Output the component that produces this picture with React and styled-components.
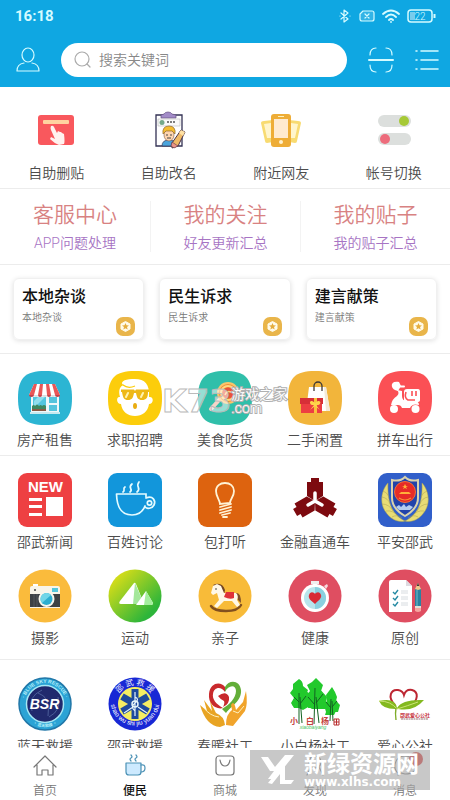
import styled, { createGlobalStyle } from 'styled-components';

const GlobalStyle = createGlobalStyle`
    * {
        box-sizing: border-box;
    }

    body {
        margin: 0;
        background-color: #fff;
        color: #4c4c4c;
        font-family: Roboto, 'Noto Sans CJK SC', sans-serif;
        font-size: 14px;
        font-weight: 350;
    }

    a {
        color: inherit;
        text-decoration: none;
    }

    button {
        padding: 0;
        border: none;
        background: none;
        cursor: pointer;
    }

    svg {
        display: block;
        flex-shrink: 0;
    }
`;

const Screen = styled.div`
    display: flex;
    flex-direction: column;
    height: 100vh;
`;

const Header = styled.header`
    background-color: #0fa7e2;
    color: #d5fbff;
`;

const StatusBar = styled.div`
    display: flex;
    align-items: center;
    justify-content: space-between;
    height: 32px;
    padding: 0 14px 0 15px;
`;

const Clock = styled.span`
    font-size: 15px;
    font-weight: bold;
`;

const StatusIcons = styled.div`
    display: flex;
    align-items: center;
    gap: 7px;
`;

const SearchRow = styled.div`
    display: flex;
    align-items: center;
    gap: 21px;
    height: 55px;
    padding: 0 11px 0 16px;
`;

const IconButton = styled.button`
    color: inherit;
`;

const SearchBox = styled.label`
    display: flex;
    flex: 1;
    align-items: center;
    gap: 8px;
    min-width: 0;
    height: 34px;
    padding: 0 13px;
    border-radius: 17px;
    background-color: #fff;
    color: #aaa;
`;

const SearchInput = styled.input`
    flex: 1;
    min-width: 0;
    padding: 0;
    border: none;
    outline: none;
    background: none;
    color: #555;
    font-family: inherit;
    font-size: 14px;
    font-weight: inherit;

    &::placeholder {
        color: #888;
        opacity: 1;
    }
`;

const Content = styled.main`
    flex: 1;
    min-height: 0;
    overflow-y: auto;
    scrollbar-width: none;
`;

const Section = styled.section`
    position: relative;
    border-bottom: 1px solid #ececec;
`;

const QuickRow = styled(Section)`
    display: grid;
    grid-template-columns: repeat(4, 1fr);
    padding: 23px 0 6px;
`;

const QuickLink = styled.a`
    display: flex;
    flex-direction: column;
    align-items: center;
    gap: 14px;
    line-height: 18px;
`;

const LinkRow = styled(Section)`
    display: grid;
    grid-template-columns: repeat(3, 1fr);
    padding: 12px 0;
`;

const TextLink = styled.a`
    display: flex;
    flex-direction: column;
    align-items: center;
    gap: 8px;
    padding: 0 0 3px;
    border-left: 1px solid #f3f3f3;

    &:first-child {
        border-left: none;
    }
`;

const LinkTitle = styled.span`
    color: #d88282;
    font-size: 21px;
    line-height: 28px;
`;

const LinkNote = styled.span`
    color: #a774c4;
    line-height: 12px;
`;

const CardRow = styled(Section)`
    display: grid;
    grid-template-columns: repeat(3, 1fr);
    gap: 15px;
    padding: 13px;
`;

const Card = styled.a`
    display: flex;
    flex-direction: column;
    gap: 2px;
    height: 62px;
    padding: 8px;
    border: 1px solid #f0f0f0;
    border-radius: 6px;
    box-shadow: 0 1px 5px rgba(0, 0, 0, 0.12);
`;

const CardTitle = styled.span`
    color: #111;
    font-size: 16px;
    font-weight: 500;
    line-height: 20px;
`;

const CardFoot = styled.span`
    display: flex;
    justify-content: space-between;
    color: #777;
    font-size: 10px;
    line-height: 18px;

    svg {
        margin-top: 8px;
    }
`;

const IconGrid = styled(Section)`
    display: grid;
    grid-template-columns: repeat(5, 1fr);
    row-gap: 18px;
    padding: 17px 0 ${(props) => props.$bottom}px;
`;

const GridLink = styled.a`
    display: flex;
    flex-direction: column;
    align-items: center;
    gap: 6px;
    line-height: 18px;
    white-space: nowrap;
`;

const TabBar = styled.nav`
    position: relative;
    display: grid;
    grid-template-columns: repeat(5, 1fr);
    height: 52px;
    background-color: #fff;
`;

const Tab = styled.a`
    display: flex;
    flex-direction: column;
    align-items: center;
    gap: 5px;
    padding-top: 6px;
    color: ${(props) => (props.$active ? '#111' : '#777')};
    font-size: 12px;
    font-weight: ${(props) => (props.$active ? 500 : 350)};
    line-height: 16px;
`;

const TabIcon = styled.span`
    position: relative;
`;

const Badge = styled.span`
    position: absolute;
    top: -2px;
    right: -6px;
    width: 14px;
    height: 14px;
    border-radius: 7px;
    background-color: #d62222;
    color: #fff;
    font-size: 10px;
    line-height: 14px;
    text-align: center;
`;

const GameMark = styled.div`
    position: absolute;
    top: 31px;
    left: 36%;
    display: flex;
    align-items: center;
    color: rgba(255, 255, 255, 0.5);
    pointer-events: none;
`;

const GameMarkLogo = styled.span`
    font-family: 'DejaVu Sans', sans-serif;
    font-size: 32px;
    font-weight: bold;
    line-height: 32px;
    -webkit-text-stroke: 1px #bbb;
`;

const GameMarkName = styled.span`
    display: flex;
    flex-direction: column;
    color: #fff;
    font-size: 14px;
    line-height: 14px;
    paint-order: stroke fill;
    -webkit-text-stroke: 2px #b0b0b0;
`;

const SiteMark = styled.div`
    position: absolute;
    top: 2px;
    right: 20px;
    display: flex;
    align-items: center;
    gap: 8px;
    width: 180px;
    height: 40px;
    padding-left: 10px;
    background-color: rgba(170, 170, 170, 0.65);
    color: #fff;
    font-weight: bold;
    pointer-events: none;
`;

const SiteMarkText = styled.span`
    display: flex;
    flex-direction: column;
    font-size: 23px;
    line-height: 24px;
`;

const SiteMarkUrl = styled.small`
    font-family: 'DejaVu Sans', sans-serif;
    font-size: 12px;
    line-height: 10px;
`;

const SQUIRCLE = 'M27 0C47 0 54 7 54 27S47 54 27 54 0 47 0 27 7 0 27 0Z';

function Tile({ children, shape, fill }) {
    return (
        <svg width="54" height="54" viewBox="0 0 54 54" aria-hidden="true">
            {shape === 'squircle' && <path d={SQUIRCLE} fill={fill} />}
            {shape === 'square' && <rect width="54" height="54" rx="9" fill={fill} />}
            {shape === 'circle' && <circle cx="27" cy="27" r="26.5" fill={fill} />}
            {children}
        </svg>
    );
}

const ShopIcon = () => (
    <Tile shape="squircle" fill="#2cb5d3">
        <path d="M13 23H41V42H13Z" fill="#eef8fa" />
        <path d="M15 26H28V39H15Z" fill="#53c6df" />
        <path d="M20 26H27L16 37V30Z" fill="#91deed" />
        <path d="M14 35q2-2 3 0q2-3 4 0q2-2 3 0q2-2 4 0v4H14Z" fill="#3e8860" />
        <path d="M14 38H28V40H14Z" fill="#8b5a45" />
        <path d="M31 26H39V32H31ZM31 34H39V40H31Z" fill="#55c4dd" />
        <path d="M16 13H37L42 24H11Z" fill="#fff" />
        <path d="M16 13h3l-3 11h-5ZM22 13h3l-1 11h-4ZM28 13h3l2 11h-4ZM34 13h3l5 11h-5Z" fill="#e95757" />
        <path d="M11 24h5a2.5 2 0 0 1-5 0M20 24h4a2 2 0 0 1-4 0M29 24h4a2 2 0 0 1-4 0M37 24h5a2.5 2 0 0 1-5 0" fill="#c43f48" />
        <path d="M16 24h4a2 2 0 0 1-4 0M24 24h5a2.5 2 0 0 1-5 0M33 24h4a2 2 0 0 1-4 0" fill="#ddd" />
        <path d="M12 41H42V43H12Z" fill="#c7e9ef" />
    </Tile>
);

const JobIcon = () => (
    <Tile shape="squircle" fill="#fccd0b">
        <path d="M12 26C10 19 12 15 16 14C11 12 16 8 24 8C36 7 42 12 41 26C46 25 46 33 41 33C40 41 34 45 27 45S14 41 13 33C8 33 8 25 12 26Z" fill="#fff" />
        <path d="M15 14Q20 18 27 15" fill="none" stroke="#fccd0b" strokeWidth="1.200" />
        <path d="M13 18.500H26L27 20L28 18.500H41V21H40C40 27 38 29 34 29S29 27 28 22H26C25 27 24 29 20 29S15 27 14 21H13Z" fill="#eeb816" />
        <path d="M20 22l-2 4M35 22l-2 4" stroke="#fff3b0" strokeWidth="2" strokeLinecap="round" />
        <ellipse cx="27" cy="35" rx="2" ry="3" fill="#e9ad12" />
    </Tile>
);

const FoodIcon = () => (
    <Tile shape="squircle" fill="#30bfaa">
        <path d="M22 28L13 38" stroke="#f6d4c8" strokeWidth="4" strokeLinecap="round" />
        <circle cx="30" cy="22" r="11" fill="#fac56b" />
        <circle cx="30" cy="22" r="9" fill="#f08a33" />
        <circle cx="30" cy="22" r="7" fill="none" stroke="#ffd982" strokeWidth="2" />
        <circle cx="30" cy="22" r="5.500" fill="#e8523d" />
        <path d="M27 24q2-5 6-3" fill="none" stroke="#ffd27a" strokeWidth="1.5" />
    </Tile>
);

const BagIcon = () => (
    <Tile shape="squircle" fill="#f2b53b">
        <path d="M21 16H38L42 40H18Z" fill="#fff" />
        <path d="M36 16H38L42 40H38Z" fill="#f3e9d8" />
        <path d="M26 20V15a4 4 0 0 1 8 0V20" fill="none" stroke="#3d3836" strokeWidth="1.3" />
        <path d="M13 32H34V42H13Z" fill="#ed3e42" />
        <path d="M12 27H35V33H12Z" fill="#d72f37" />
        <path d="M26 27H29V42H26Z" fill="#f9c33b" />
        <path d="M27 32c-6-6-7 3-1 2l-4 5 5-4 5 4-4-5c7 1 5-8-1-2" fill="#ffd54b" />
    </Tile>
);

const ScooterIcon = () => (
    <Tile shape="squircle" fill="#fb5055">
        <path d="M21 11c-10-2-9 8-1 9l3-5Z" fill="#fff" />
        <path d="M20 15.500h6" stroke="#fff" strokeWidth="2" strokeLinecap="round" />
        <path d="M19 19q3 3 0 6-5 3-6 9h7q3 0 4 3h8q2-5 9-3 0-4-5-4h-7q-5 0-5-5v-5Z" fill="#fff" />
        <path d="M29 18H40q2 0 2 3V29q0 2-3 2H26V21q0-3 3-3" fill="#fff" />
        <path d="M34 20v5M38 20v5M28 21q-2 6 2 8h7" stroke="#fb5055" strokeWidth="1.600" fill="none" />
        <circle cx="16" cy="38" r="4" fill="#fff" />
        <circle cx="37.500" cy="38" r="4" fill="#fff" />
    </Tile>
);

const NewsIcon = () => (
    <Tile shape="square" fill="#ee4042">
        <text x="27.500" y="19" fill="#fff" fontFamily="Liberation Sans, sans-serif" fontSize="15" fontWeight="bold" textAnchor="middle">
            NEW
        </text>
        <path d="M11 25H24V28H11ZM11 32H24V35H11ZM11 40H24V43H11ZM28 24H45V43H28Z" fill="#fff" />
    </Tile>
);

const TalkIcon = () => (
    <Tile shape="square" fill="#1296db">
        <g fill="none" stroke="#e4fbff" strokeWidth="1.700" strokeLinecap="round">
            <path d="M8.500 21H38V24M8.500 21C9 36 14 42 24 42C31 42 35 38 37 33" />
            <path d="M38 25C45 22 48 28 46 32S39 36 37 34" />
            <circle cx="41.500" cy="30" r="2.200" />
            <path d="M15 19C18 17 14 16 17 14M22 19C26 16 19 15 24 11M29 19C34 15 27 14 31 9" />
        </g>
    </Tile>
);

const BulbIcon = () => (
    <Tile shape="square" fill="#dd630f">
        <g fill="none" stroke="#fff3d6" strokeWidth="1.800" strokeLinecap="round">
            <path d="M22 31C22 27 18 24 18 18C18 13 22 10 27 10S36 13 36 18C36 24 32 26 32 30Z" />
            <path d="M22 34L33 31M22 37L33 34M22 40L33 37M24 42L32 40M25 44H29" />
        </g>
    </Tile>
);

const FinanceIcon = () => (
    <Tile>
        {[0, 120, 240].map((angle) => (
            <path
                key={angle}
                d="M23 5H31V9H35V23L27 28L19 23V9H23Z"
                fill="#7d0a0f"
                transform={`rotate(${angle} 27 28)`}
            />
        ))}
        <path d="M27 20V28L20 32M27 28L34 32" fill="none" stroke="#fff" strokeWidth="3.500" strokeLinecap="round" />
    </Tile>
);

const PoliceIcon = () => (
    <Tile shape="square" fill="#315fca">
        <path d="M27 4C23 8 18 8 14 7V25C14 34 20 39 27 43C34 39 40 34 40 25V7C36 8 31 8 27 4Z" fill="#2243aa" stroke="#d8d2ae" strokeWidth="2" />
        <g fill="#e8dc75" stroke="#aaa04e" strokeWidth=".5">
            <path d="M10 10C4 16 1 29 7 38C12 46 20 50 27 48C17 43 9 34 10 10Z" />
            <path d="M44 10C50 16 53 29 47 38C42 46 34 50 27 48C37 43 45 34 44 10Z" />
            <path d="M4 24q6 1 8 7M4 31q7 0 11 7M8 38q7-1 12 5M14 44q5-3 10 1M5 18q4 1 6 6" fill="none" />
            <path d="M50 24q-6 1-8 7M50 31q-7 0-11 7M46 38q-7-1-12 5M40 44q-5-3-10 1M49 18q-4 1-6 6" fill="none" />
        </g>
        <circle cx="27" cy="19" r="10.500" fill="#e72b27" stroke="#f1703b" strokeWidth="1" />
        <path d="M27 11l1 2h2l-2 1 1 2-2-1-2 1 1-2-2-1h2ZM21 21H33L31 19H23Z" fill="#ffb13a" />
        <path d="M21 25q6 4 12 0" stroke="#f79233" strokeWidth="1.200" fill="none" />
        <path d="M18 34l3-2 2 2 3-3 2 3 3-2 4 2-3 3H21Z" fill="#b4cdef" />
    </Tile>
);

const CameraIcon = () => (
    <Tile shape="circle" fill="#fabb3c">
        <path d="M12 19q0-2 2-2H40q2 0 2 2V39H12Z" fill="#f8f4e9" />
        <path d="M12 25H42V38H12Z" fill="#3d4144" />
        <path d="M16 25V38M19 25V38" stroke="#55595c" />
        <rect x="15" y="15" width="5" height="2" fill="#fff" />
        <rect x="34" y="19" width="6" height="4" fill="#54c7dd" />
        <circle cx="17" cy="21" r="1" fill="#444" />
        <circle cx="28.500" cy="30" r="8" fill="#f6f6ed" />
        <circle cx="28.500" cy="30" r="6" fill="#2caed0" />
        <path d="M24 34A6 6 0 0 1 33 26Z" fill="#70d6e8" />
    </Tile>
);

const SportIcon = () => (
    <Tile>
        <defs>
            <linearGradient id="sport" x1="0" y1="0" x2="1" y2="1">
                <stop offset=".15" stopColor="#d3dc19" />
                <stop offset=".8" stopColor="#2db53a" />
            </linearGradient>
        </defs>
        <circle cx="27" cy="27" r="26.5" fill="url(#sport)" />
        <path d="M26 14Q27 13 28 15L36 35H13Q10 35 12 32Z" fill="#fff" />
        <path d="M27 14L36 35H25Z" fill="#a4e79a" />
        <path d="M38 22L45 34Q45 36 43 36H28Z" fill="#fff" />
        <path d="M38 22L45 34Q45 36 43 36H36Z" fill="#a4ef9d" />
    </Tile>
);

const HorseIcon = () => (
    <Tile shape="circle" fill="#f8bb39">
        <path d="M13 37Q16 42 28 42T43 36" fill="none" stroke="#82501f" strokeWidth="2.500" strokeLinecap="round" />
        <path d="M15 16Q24 12 27 21L26 26L22 22Z" fill="#714523" />
        <path d="M38 24Q43 23 43 34L40 31Z" fill="#805028" />
        <path d="M13 24L15 17L19 15L23 17L26 24H38Q41 27 39 31L42 36L39 38L34 32H26L19 39L16 37L21 31L19 24L15 26Z" fill="#fff8e8" />
        <path d="M28 23H36V29Q32 31 26 28Z" fill="#df323a" />
        <circle cx="18" cy="20" r=".8" fill="#333" />
    </Tile>
);

const HealthIcon = () => (
    <Tile shape="circle" fill="#df4e61">
        <path d="M23 12H31V15H29V18H25V15H23Z" fill="#f1eeee" />
        <path d="M36 17l3-2 1 2-2 3Z" fill="#f5d9dd" />
        <circle cx="27" cy="29" r="14" fill="#fff" />
        <circle cx="27" cy="29" r="11" fill="#b8e5ec" />
        <path d="M27 18A11 11 0 0 1 27 40Z" fill="#8bd0df" />
        <path d="M27 35C22 31 20 29 21 26C22 22 26 23 27 25C28 23 32 22 33 26C34 29 31 31 27 35Z" fill="#d92b34" />
    </Tile>
);

const WritingIcon = () => (
    <Tile shape="circle" fill="#df4e61">
        <path d="M11 13Q11 11 13 11H28L34 17V43H11Z" fill="#fff" />
        <path d="M28 11L34 17H28Z" fill="#ded9df" />
        <path d="M15 23l2 2 3-4M15 29l2 2 3-4M15 35l2 2 3-4" fill="none" stroke="#258aa3" strokeWidth="1.400" />
        <path d="M23 22H30M23 24H30M23 28H30M23 30H30M23 34H30M23 36H30" stroke="#d7dce0" />
        <path d="M37 21L40 14L43 21V38H37Z" fill="#2b82a0" />
        <path d="M37 20L40 14L43 20L40 21Z" fill="#efc78a" />
        <path d="M39 17L40 14L41 17Z" fill="#222" />
        <path d="M39 21V38" stroke="#74b9c9" />
        <path d="M37 38H43V42Q40 44 37 42Z" fill="#f5a6a0" />
        <path d="M37 37H43V39H37Z" fill="#e2dfd7" />
    </Tile>
);

const BlueSkyIcon = () => (
    <Tile>
        <defs>
            <path id="skyTop" d="M6 27A21 21 0 0 1 48 27" />
            <path id="skyBottom" d="M4 27A23 23 0 0 0 50 27" />
        </defs>
        <circle cx="27" cy="27" r="26" fill="#2ba3d5" stroke="#2177a8" strokeWidth="1.500" />
        <circle cx="27" cy="27" r="18.500" fill="#20296d" stroke="#a6e7f4" strokeWidth="1.500" />
        <path d="M14 34Q9 20 24 13M40 20Q44 33 31 40M20 16Q33 20 30 39" fill="none" stroke="#5d72aa" strokeWidth=".7" />
        <g fill="#b8eff9" fontFamily="Liberation Sans, sans-serif" fontSize="5" fontWeight="bold" textAnchor="middle">
            <text>
                <textPath href="#skyTop" startOffset="50%">· BLUE SKY RESCUE ·</textPath>
            </text>
            <text fontFamily="Noto Sans CJK SC, sans-serif" fontSize="4">
                <textPath href="#skyBottom" startOffset="50%">· 蓝天救援 ·</textPath>
            </text>
        </g>
        <text x="26.500" y="32" fill="#fff" fontFamily="Liberation Sans, sans-serif" fontSize="14" fontStyle="italic" fontWeight="bold" textAnchor="middle">
            BSR
        </text>
    </Tile>
);

const RescueIcon = () => (
    <Tile>
        <defs>
            <path id="rescueTop" d="M8 27A19 19 0 0 1 46 27" />
            <path id="rescueBottom" d="M3 19A24.500 24.500 0 1 0 51 19" />
        </defs>
        <circle cx="27" cy="27" r="26.5" fill="#1828d5" />
        <circle cx="27" cy="27" r="17" fill="#f5ee63" />
        {[0, 60, 120].map((angle) => (
            <path key={angle} d="M23.500 12H30.500V42H23.500Z" fill="#1e4b9e" transform={`rotate(${angle} 27 27)`} />
        ))}
        <circle cx="27" cy="27" r="3" fill="none" stroke="#e8f5fa" strokeWidth="1.500" />
        <path d="M27 15V39M27 20Q32 22 27 26T27 34M25 30L16 36M30 30L39 36" fill="none" stroke="#e8f5fa" strokeWidth="1.200" />
        <text fill="#fff" fontFamily="Noto Sans CJK SC, sans-serif" fontSize="8" textAnchor="middle">
            <textPath href="#rescueTop" startOffset="50%">邵 武 救 援</textPath>
        </text>
        <text fill="#fff" fontFamily="Liberation Sans, sans-serif" fontSize="6.500" textAnchor="middle">
            <textPath href="#rescueBottom" startOffset="50%">shao wu shi jiu yuan dui</textPath>
        </text>
    </Tile>
);

const WarmIcon = () => (
    <Tile>
        <path d="M27 10C23 4 12 5 11 17C10 27 18 33 25 31C18 27 14 22 15 17C16 10 23 9 27 15Z" fill="#c92a2d" />
        <path d="M27 10C31 2 42 3 43 13C44 24 33 29 28 36L24 32C31 28 38 21 38 14C38 7 30 8 27 15Z" fill="#63ae39" />
        <path d="M20 19Q28 13 31 20Q32 27 25 30Q27 26 26 24Q23 23 20 19Z" fill="#c8292d" />
        <path d="M2 28L9 34L6 23L14 34L12 24L18 36Q26 39 27 48L22 50Q8 49 2 28Z" fill="#e8a423" />
        <path d="M48 14Q50 27 47 34L35 49L28 48Q28 37 34 33L33 28Q36 22 38 33L45 25Z" fill="#f1a42b" />
        <path d="M6 31q6 8 15 9M35 34l5 2 6-7" fill="none" stroke="#fff1be" strokeWidth="1" />
    </Tile>
);

const TreesIcon = () => (
    <Tile>
        <g fill="#22c92c">
            <path d="M11 2Q15 4 15 9L20 13L18 18L20 24L16 31H6L3 26L6 21L2 16L5 12L5 7Z" />
            <path d="M28 1L32 5L35 8L33 14L37 20L34 25L36 31H20L21 24L18 19L22 14L19 8L24 5Z" />
            <path d="M44 10L47 15L49 20L48 24L52 28L50 35H38L36 28L39 24L38 18Z" />
            <path d="M10 8L22 17V29L15 33L4 28ZM30 10L39 20L37 32H24L19 29ZM44 16L51 28L46 38H37Z" />
        </g>
        <path d="M11 47V16M14 46L12 20M26 47L27 11M31 46L28 20M42 44L43 22M45 44L44 24M11 25L6 20M12 27L18 19M27 28L20 20M28 26L35 17M43 31L38 25M44 30L49 24" fill="none" stroke="#126221" strokeWidth="1" />
        <g fill="#c3433d" fontFamily="Noto Sans CJK SC, sans-serif" fontSize="8" fontWeight="bold">
            <text x="2" y="47">小</text>
            <text x="18" y="47">白</text>
            <text x="33" y="47">杨</text>
        </g>
        <path d="M46 42H51V48H46ZM46 45H51M48.500 42V48" fill="none" stroke="#b82d2d" />
        <text x="25" y="52" fill="#45c45b" fontFamily="Liberation Sans, sans-serif" fontSize="5" fontStyle="italic" textAnchor="middle">
            xiaobaiyang
        </text>
    </Tile>
);

const LoveIcon = () => (
    <Tile>
        <path d="M17 28C9 20 13 12 20 13Q25 14 26 18Q28 12 34 13C41 15 40 23 33 29" fill="none" stroke="#bd2632" strokeWidth="2" />
        <path d="M1 24Q17 20 19 31Q24 22 46 23Q36 35 20 32Q5 33 1 24Z" fill="#83b91f" />
        <path d="M1 24Q13 24 19 32Q29 29 40 25" fill="none" stroke="#cce477" />
        <path d="M18 31Q17 36 18 43" fill="none" stroke="#7eac27" strokeWidth="1.400" />
        <text x="22" y="40" fill="#c52d38" fontFamily="Noto Sans CJK SC, sans-serif" fontSize="5" fontWeight="bold">
            邵武爱心公社
        </text>
        <path d="M23 42H50" stroke="#7f5555" strokeWidth=".8" strokeDasharray="2 .5" />
    </Tile>
);

function QuickIcon({ children }) {
    return (
        <svg width="40" height="40" viewBox="0 0 40 40" aria-hidden="true">
            {children}
        </svg>
    );
}

const DeleteIcon = () => (
    <QuickIcon>
        <rect x="2" y="5" width="36" height="30" rx="3" fill="#f9585d" />
        <rect x="7" y="10" width="26" height="4" rx="1" fill="#ffd2a0" />
        <path d="M15 16q2-1 3 1l3 6 1-2 2 1 1 0 1 1 2 1q1 8 0 10l-5 1q-5-2-9-6l1-2 4 2-4-9q-1-2 0-4" fill="#fff2ef" />
    </QuickIcon>
);

const RenameIcon = () => (
    <QuickIcon>
        <path d="M7 5H33V36H7Z" fill="#fff" stroke="#333254" strokeWidth="1.300" />
        <path d="M12 5L15 4Q16 2 19 2T23 4L27 5V8H12Z" fill="#a28bc7" stroke="#665183" strokeWidth=".7" />
        <path d="M9 9H31V16H9Z" fill="#fafafa" stroke="#bbb" strokeWidth=".6" />
        <circle cx="13" cy="12.500" r="2.500" fill="#74a989" />
        <path d="M18 12H26" stroke="#555" strokeWidth="1.500" strokeDasharray="2 1" />
        <path d="M13 36Q13 30 20 30T27 36Z" fill="#4aa5dd" stroke="#394365" strokeWidth=".8" />
        <ellipse cx="20" cy="25" rx="5" ry="6" fill="#ffd5af" stroke="#754" strokeWidth=".6" />
        <path d="M14 24Q13 16 20 16T26 24L23 21H17Z" fill="#f5bd31" stroke="#8f6730" strokeWidth=".7" />
        <path d="M17 25h2m2 0h2M18 28h4" stroke="#444" />
        <path d="M32 20L36 22L29 36L23 38L23 33Z" fill="#efb966" stroke="#493349" strokeWidth="1" />
        <path d="M23 32L29 36L25 38L22 36Z" fill="#e99386" stroke="#5a3546" strokeWidth=".6" />
        <path d="M32 20L36 22L34 26L30 23Z" fill="#ffe1a4" />
    </QuickIcon>
);

const PhonesIcon = () => (
    <QuickIcon>
        <path d="M0 13Q0 11 3 11L12 10V32L6 33Q4 33 4 31Z" fill="#f8db71" />
        <path d="M3 14L10 13V28H6Z" fill="#fff5cc" />
        <path d="M40 13Q40 11 37 11L28 10V32L34 33Q36 33 36 31Z" fill="#f8db71" />
        <path d="M37 14L30 13V28H34Z" fill="#fff5cc" />
        <rect x="10" y="4" width="20" height="33" rx="3" fill="#eead37" />
        <rect x="13" y="9" width="14" height="19" fill="#ffead0" />
        <path d="M17 6.500H23" stroke="#fff2bd" />
        <circle cx="20" cy="32" r="2" fill="#fff1cd" />
    </QuickIcon>
);

const SwitchIcon = () => (
    <QuickIcon>
        <rect x="4" y="5" width="33" height="12" rx="6" fill="#dcdfdd" />
        <rect x="4" y="23" width="33" height="12" rx="6" fill="#dcdfdd" />
        <circle cx="30" cy="11" r="5" fill="#a6c936" />
        <circle cx="11" cy="29" r="5" fill="#ed6c7c" />
    </QuickIcon>
);

const CardBadge = () => (
    <svg width="19" height="19" viewBox="0 0 19 19" aria-hidden="true">
        <rect width="19" height="19" rx="7" fill="#e9b54a" />
        <path d="M9.500 4.500L14 7V12L9.500 14.500L5 12V7Z" fill="#fffbea" stroke="#fffbea" strokeLinejoin="round" />
        <path d="M9.500 6l1 2.300 2.500.2-2 1.600.7 2.400-2.200-1.300-2.200 1.300.7-2.400-2-1.600 2.500-.2Z" fill="#e5ad3e" />
    </svg>
);

function LineIcon({ children, width = 24, height = 24, stroke = 'currentColor', strokeWidth = 1.2 }) {
    return (
        <svg
            width={width}
            height={height}
            viewBox={`0 0 ${width} ${height}`}
            fill="none"
            stroke={stroke}
            strokeWidth={strokeWidth}
            strokeLinecap="round"
            strokeLinejoin="round"
            aria-hidden="true"
        >
            {children}
        </svg>
    );
}

const quickLinks = [
    { label: '自助删贴', Icon: DeleteIcon },
    { label: '自助改名', Icon: RenameIcon },
    { label: '附近网友', Icon: PhonesIcon },
    { label: '帐号切换', Icon: SwitchIcon },
];

const textLinks = [
    { title: '客服中心', note: 'APP问题处理' },
    { title: '我的关注', note: '好友更新汇总' },
    { title: '我的贴子', note: '我的贴子汇总' },
];

const cards = ['本地杂谈', '民生诉求', '建言献策'];

const lifeLinks = [
    { label: '房产租售', Icon: ShopIcon },
    { label: '求职招聘', Icon: JobIcon },
    { label: '美食吃货', Icon: FoodIcon },
    { label: '二手闲置', Icon: BagIcon },
    { label: '拼车出行', Icon: ScooterIcon },
];

const forumLinks = [
    { label: '邵武新闻', Icon: NewsIcon },
    { label: '百姓讨论', Icon: TalkIcon },
    { label: '包打听', Icon: BulbIcon },
    { label: '金融直通车', Icon: FinanceIcon },
    { label: '平安邵武', Icon: PoliceIcon },
    { label: '摄影', Icon: CameraIcon },
    { label: '运动', Icon: SportIcon },
    { label: '亲子', Icon: HorseIcon },
    { label: '健康', Icon: HealthIcon },
    { label: '原创', Icon: WritingIcon },
];

const groupLinks = [
    { label: '蓝天救援', Icon: BlueSkyIcon },
    { label: '邵武救援', Icon: RescueIcon },
    { label: '春暖社工', Icon: WarmIcon },
    { label: '小白杨社工', Icon: TreesIcon },
    { label: '爱心公社', Icon: LoveIcon },
];

const tabs = [
    { label: '首页', icon: <path d="M1 13L12 2L23 13M4 11V21H9V16H15V21H20V11" /> },
    {
        label: '便民',
        active: true,
        icon: (
            <g stroke="#4b91b5">
                <path d="M3 9H18V18Q18 21 15 21H6Q3 21 3 18Z" fill="#cdeaff" />
                <path d="M18 11Q22 10 22 14T18 18M8 7Q6 5 8 4T8 1M13 7Q11 5 13 4T13 1" />
            </g>
        ),
    },
    {
        label: '商城',
        icon: (
            <>
                <rect x="3" y="2" width="18" height="19" rx="3" />
                <path d="M7 6Q8 12 12 12T17 6" />
            </>
        ),
    },
    {
        label: '发现',
        icon: (
            <>
                <circle cx="12" cy="8" r="6" />
                <path d="M8 13L4 21M16 13L20 21" />
            </>
        ),
    },
    { label: '消息', badge: '1', icon: <path d="M5 19Q1 16 2 10Q4 2 12 2T22 11T12 20L8 19L5 21Z" /> },
];

function LinkGrid({ items, bottom, children }) {
    return (
        <IconGrid $bottom={bottom}>
            {items.map(({ label, Icon }) => (
                <GridLink href="#" key={label}>
                    <Icon />
                    {label}
                </GridLink>
            ))}
            {children}
        </IconGrid>
    );
}

function StatusSymbols() {
    return (
        <StatusIcons>
            <LineIcon width={14} height={16}>
                <path d="M3 5L10 11L6 14V2L10 5L3 11" />
                <path d="M2 8h0M12 8h0" />
            </LineIcon>
            <LineIcon width={16} height={14}>
                <path d="M4 2H13Q15 2 15 4V10Q15 12 13 12H3Q1 12 1 10V5Z" fill="rgba(255,255,255,.15)" />
                <path d="M6 5L10 9M10 5L6 9" />
            </LineIcon>
            <LineIcon width={18} height={14} strokeWidth={1.8}>
                <path d="M1 5Q9-2 17 5M4 8Q9 3 14 8M7 11Q9 9 11 11" />
                <path d="M9 13h0" />
            </LineIcon>
            <svg width="29" height="14" viewBox="0 0 29 14" role="img" aria-label="22%">
                <rect x="1" y="1" width="24" height="12" rx="3" fill="none" stroke="currentColor" strokeWidth="1.500" />
                <rect x="3" y="3" width="5" height="8" fill="#79ccec" />
                <path d="M27.500 5V9" stroke="currentColor" strokeWidth="2" />
                <text x="13" y="10.500" fill="currentColor" fontFamily="Roboto, sans-serif" fontSize="10" textAnchor="middle">
                    22
                </text>
            </svg>
        </StatusIcons>
    );
}

export default function App() {
    return (
        <Screen>
            <GlobalStyle />
            <Header>
                <StatusBar>
                    <Clock>16:18</Clock>
                    <StatusSymbols />
                </StatusBar>
                <SearchRow>
                    <IconButton type="button" aria-label="我的">
                        <LineIcon height={26}>
                            <ellipse cx="12" cy="8" rx="6" ry="7" />
                            <path d="M8 16Q1 17 1 24H23Q23 17 16 16" />
                        </LineIcon>
                    </IconButton>
                    <SearchBox>
                        <LineIcon width={17} height={18}>
                            <circle cx="8" cy="8" r="7" />
                            <path d="M13 13L16 16" />
                        </LineIcon>
                        <SearchInput type="search" placeholder="搜索关键词" aria-label="搜索关键词" />
                    </SearchBox>
                    <IconButton type="button" aria-label="扫一扫">
                        <LineIcon width={26} height={26}>
                            <path d="M2 8Q2 1 8 1M18 1Q24 1 24 8M2 18Q2 25 8 25M18 25Q24 25 24 18" />
                            <path d="M1 13H25" strokeWidth="2" />
                        </LineIcon>
                    </IconButton>
                    <IconButton type="button" aria-label="菜单">
                        <LineIcon strokeWidth={1.6}>
                            <path d="M6 3H23M6 12H23M6 21H23M1 3H2M1 12H2M1 21H2" />
                        </LineIcon>
                    </IconButton>
                </SearchRow>
            </Header>

            <Content>
                <QuickRow>
                    {quickLinks.map(({ label, Icon }) => (
                        <QuickLink href="#" key={label}>
                            <Icon />
                            {label}
                        </QuickLink>
                    ))}
                </QuickRow>
                <LinkRow>
                    {textLinks.map(({ title, note }) => (
                        <TextLink href="#" key={title}>
                            <LinkTitle>{title}</LinkTitle>
                            <LinkNote>{note}</LinkNote>
                        </TextLink>
                    ))}
                </LinkRow>
                <CardRow>
                    {cards.map((name) => (
                        <Card href="#" key={name}>
                            <CardTitle>{name}</CardTitle>
                            <CardFoot>
                                {name}
                                <CardBadge />
                            </CardFoot>
                        </Card>
                    ))}
                </CardRow>
                <LinkGrid items={lifeLinks} bottom={6}>
                    <GameMark>
                        <GameMarkLogo>K73</GameMarkLogo>
                        <GameMarkName>
                            <span>游戏之家</span>
                            <span>.com</span>
                        </GameMarkName>
                    </GameMark>
                </LinkGrid>
                <LinkGrid items={forumLinks} bottom={12} />
                <LinkGrid items={groupLinks} bottom={12} />
            </Content>

            <TabBar>
                {tabs.map(({ label, icon, active, badge }) => (
                    <Tab href="#" key={label} $active={active}>
                        <TabIcon>
                            <LineIcon>{icon}</LineIcon>
                            {badge && <Badge>{badge}</Badge>}
                        </TabIcon>
                        {label}
                    </Tab>
                ))}
                <SiteMark>
                    <svg width="36" height="32" viewBox="0 0 36 32" aria-hidden="true">
                        <path d="M1 3H8L15 13L25 1H34L15 25H8L14 17L10 17Z" fill="#fff" />
                        <path d="M8 29L25 8V26H34L31 30H20V20L12 30Z" fill="#fff" />
                    </svg>
                    <SiteMarkText>
                        新绿资源网
                        <SiteMarkUrl>www.xlhs.com</SiteMarkUrl>
                    </SiteMarkText>
                </SiteMark>
            </TabBar>
        </Screen>
    );
}
